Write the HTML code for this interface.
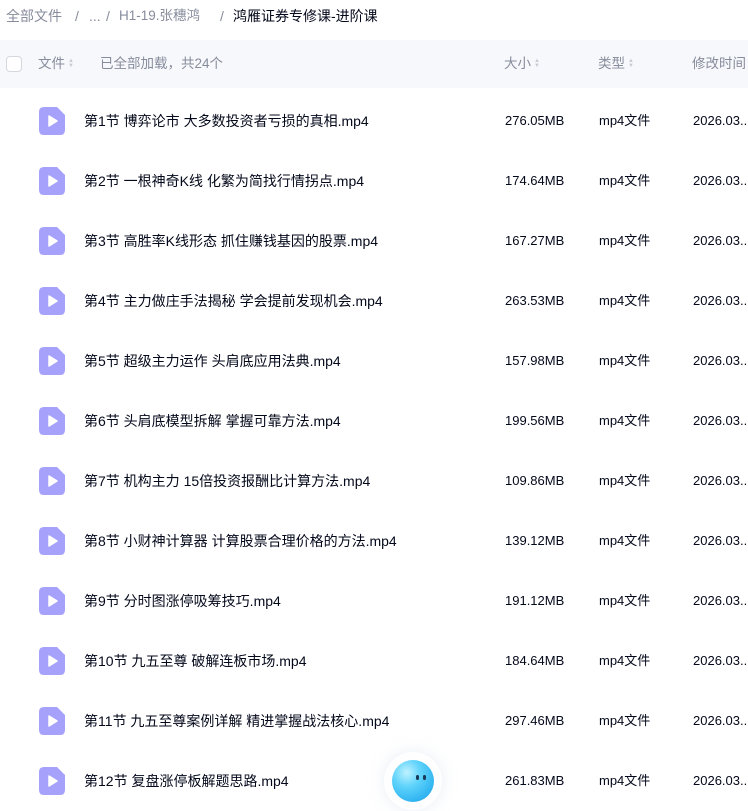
<!DOCTYPE html>
<html><head><meta charset="utf-8"><style>
*{margin:0;padding:0;box-sizing:border-box}
body{width:748px;height:804px;overflow:hidden;background:#fff;font-family:"Liberation Sans","Noto Sans CJK SC",sans-serif;position:relative}
.bc{position:absolute;top:6px;left:0;font-size:14px;line-height:20px;color:#878c9c;white-space:nowrap}
.bc span{position:absolute;top:0}
.bc .cur{color:#03081a}
.hd{position:absolute;top:40px;left:0;width:748px;height:48px;background:#f7f8fb;font-size:13.5px;color:#878c9c}
.hd div{position:absolute;top:14px;line-height:20px;white-space:nowrap}
.cb{position:absolute;left:6px;top:16px;width:16px;height:16px;border:1px solid #d4d7de;border-radius:4px;background:#fff}
.ar{display:inline-block;width:6px;vertical-align:middle;margin-left:3px;color:#c8ccd4;font-size:6px;line-height:5px}
.row{position:absolute;left:0;width:748px;height:60px;font-size:13px;color:#03081a}
.row div{position:absolute;top:20px;line-height:20px;height:20px;white-space:nowrap}
.row .nm{font-size:14px}
.ic{position:absolute;left:39px;top:16px}
.mascot{position:absolute;left:392px;top:760px;width:42px;height:42px;border-radius:50%;background:radial-gradient(circle at 35% 30%,#bff2ff 0%,#5fd3fb 35%,#2fb3f0 75%,#3aa8e6 100%);box-shadow:0 0 0 8px rgba(255,255,255,.9),0 0 14px 10px rgba(230,236,245,.7)}
.eye{position:absolute;width:3px;height:5px;background:#1a3a5a;border-radius:2px;top:15px}
</style></head><body>
<div class="bc"><span style="left:6px">全部文件</span><span style="left:75px">/</span><span style="left:89px">...</span><span style="left:106px">/</span><span style="left:119px;font-size:13.5px">H1-19.张穗鸿</span><span style="left:220px">/</span><span class="cur" style="left:233px">鸿雁证券专修课-进阶课</span></div>
<div class="hd">
<span class="cb"></span>
<div style="left:38px">文件<span class="ar">▲<br>▼</span></div>
<div style="left:100px">已全部加载，共24个</div>
<div style="left:504px">大小<span class="ar">▲<br>▼</span></div>
<div style="left:598px">类型<span class="ar">▲<br>▼</span></div>
<div style="left:692px">修改时间<span class="ar">▲<br>▼</span></div>
</div>
<div id="rows"></div>
<script>
var d=[["第1节 博弈论市 大多数投资者亏损的真相.mp4","276.05MB"],["第2节 一根神奇K线 化繁为简找行情拐点.mp4","174.64MB"],["第3节 高胜率K线形态 抓住赚钱基因的股票.mp4","167.27MB"],["第4节 主力做庄手法揭秘 学会提前发现机会.mp4","263.53MB"],["第5节 超级主力运作 头肩底应用法典.mp4","157.98MB"],["第6节 头肩底模型拆解 掌握可靠方法.mp4","199.56MB"],["第7节 机构主力 15倍投资报酬比计算方法.mp4","109.86MB"],["第8节 小财神计算器 计算股票合理价格的方法.mp4","139.12MB"],["第9节 分时图涨停吸筹技巧.mp4","191.12MB"],["第10节 九五至尊 破解连板市场.mp4","184.64MB"],["第11节 九五至尊案例详解 精进掌握战法核心.mp4","297.46MB"],["第12节 复盘涨停板解题思路.mp4","261.83MB"]];
var h="";
d.forEach(function(r,i){h+='<div class="row" style="top:'+(91+i*60)+'px"><svg class="ic" width="26" height="28" viewBox="0 0 26 28"><path d="M5 0H18L26 8V23Q26 28 21 28H5Q0 28 0 23V5Q0 0 5 0Z" fill="#a6a2fb"/><path d="M10 9L18 14L10 19Z" fill="#fff" stroke="#fff" stroke-width="1.5" stroke-linejoin="round"/></svg><div class="nm" style="left:84px">'+r[0]+'</div><div style="left:505px">'+r[1]+'</div><div class="nm" style="left:599px;font-size:13px">mp4文件</div><div style="left:693px">2026.03...</div></div>';});
document.getElementById("rows").innerHTML=h;
</script>
<div class="mascot"><span class="eye" style="left:24px"></span><span class="eye" style="left:31px"></span></div>
</body></html>
